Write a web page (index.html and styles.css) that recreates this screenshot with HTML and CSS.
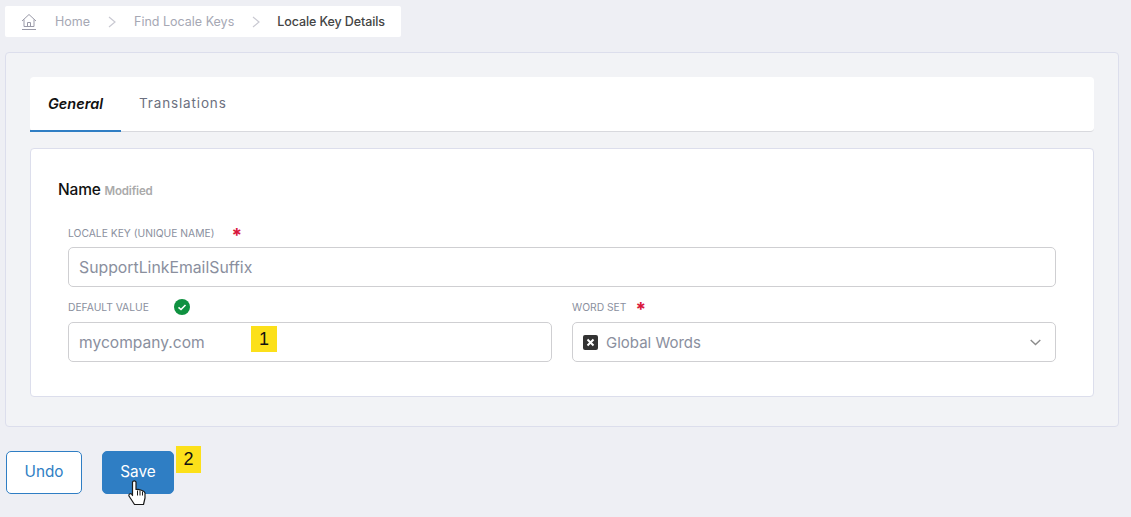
FILE: index.html
```html
<!DOCTYPE html>
<html lang="en">
<head>
<meta charset="utf-8">
<title>Locale Key Details</title>
<link rel="stylesheet" href="styles.css">
</head>
<body>
<nav class="crumbs">
  <svg class="home" width="16" height="18" viewBox="0 0 16 18" fill="none" stroke="#9a9aa8" stroke-width="1"><path d="M1 8 8 1.500 15 8M3 6.500V13.500H13V6.500M6.500 13.500V9.500H9.500V13.500M1 16.500H15"/></svg>
  <span class="crumb">Home</span>
  <svg class="sep" width="8" height="12" viewBox="0 0 8 12" fill="none" stroke="#c9c9d2" stroke-width="1.2"><path d="M1 1 7 6 1 11"/></svg>
  <span class="crumb">Find Locale Keys</span>
  <svg class="sep" width="8" height="12" viewBox="0 0 8 12" fill="none" stroke="#c9c9d2" stroke-width="1.2"><path d="M1 1 7 6 1 11"/></svg>
  <span class="crumb current">Locale Key Details</span>
</nav>
<main class="panel">
  <div class="tabs">
    <div class="tab active">General</div>
    <div class="tab">Translations</div>
  </div>
  <section class="card">
    <h2 class="title">Name <small class="modified">Modified</small></h2>
    <div class="label-row key-label"><label class="label">LOCALE KEY (UNIQUE NAME)</label><span class="req">*</span></div>
    <div class="input key-input">SupportLinkEmailSuffix</div>
    <div class="cols">
      <div class="col">
        <div class="label-row"><label class="label">DEFAULT VALUE</label>
          <svg class="ok" width="16" height="16" viewBox="0 0 16 16"><circle cx="8" cy="8" r="8" fill="#0f9140"/><path d="M4.500 8.300 7 10.500 11.500 6" fill="none" stroke="#fff" stroke-width="1.600"/></svg>
        </div>
        <div class="input">mycompany.com<span class="callout one">1</span></div>
      </div>
      <div class="col">
        <div class="label-row"><label class="label">WORD SET</label><span class="req near">*</span></div>
        <div class="input select">
          <span class="x"><svg width="15" height="15" viewBox="0 0 15 15"><rect width="15" height="15" rx="2" fill="#333"/><path d="M4.500 4.500 10.500 10.500M10.500 4.500 4.500 10.500" stroke="#fff" stroke-width="2"/></svg></span>
          <span class="grow">Global Words</span>
          <svg width="11" height="7" viewBox="0 0 11 7" fill="none" stroke="#8c8c8c" stroke-width="1.400"><path d="M.7 1 5.500 5.600 10.300 1"/></svg>
        </div>
      </div>
    </div>
  </section>
</main>
<div class="actions">
  <button class="btn undo">Undo</button>
  <button class="btn save">Save
    <span class="callout two">2</span>
    <svg class="cursor" width="18" height="26" viewBox="0 0 18 26"><path d="M4.500 2C5 .5 7.500.5 8 2V9.500L10 9.300 12 9.800 14 10.500 16 11.500 17 13V18L15.500 24.500H6.500L1 16C.5 14 2.500 13 3.500 14L4.500 15.500Z" fill="#fff" stroke="#1a1a1a" stroke-width="1.200" stroke-linejoin="round"/><path d="M9.500 10.500V15.500M12 10.500V15.500M14.500 11.500V15.500" stroke="#1a1a1a" stroke-width="1" fill="none"/></svg>
  </button>
</div>
</body>
</html>
```
FILE: styles.css
```css
* { box-sizing: border-box; }
html, body { margin: 0; }
body {
  width: 1131px;
  height: 517px;
  overflow: hidden;
  background: #eeeff4;
  padding: 6px 12px 0 5px;
  font-family: Inter, "Noto Sans", sans-serif;
  color: #8a8f9e;
}
.crumbs {
  width: 396px;
  height: 31px;
  background: #fff;
  border-radius: 2px;
  display: flex;
  align-items: center;
  padding-left: 16px;
  font-size: 12.5px;
}
.home { margin-right: 18px; }
.crumb { color: #a6a8b4; }
.sep { margin: 0 18px 0 18px; }
.current { color: #444; font-weight: 500; letter-spacing: -.1px; margin-left: -1px; }
.panel {
  margin-top: 15px;
  width: 1114px;
  height: 375px;
  background: #f2f3f6;
  border: 1px solid #dcdeec;
  border-radius: 4px;
  padding: 24px;
}
.tabs {
  height: 55px;
  background: #fff;
  border-bottom: 1px solid #d8d9de;
  border-radius: 4px;
  display: flex;
  font-size: 13.5px;
}
.tab {
  padding: 0 18px;
  line-height: 53px;
  color: #6c7080;
  letter-spacing: .85px;
}
.tab.active {
  width: 91px;
  height: 55px;
  border-bottom: 2px solid #2f7ec4;
  color: #111;
  font-size: 14.5px;
  font-style: italic;
  font-weight: 600;
  letter-spacing: 0;
}
.card {
  margin-top: 16px;
  height: 249px;
  background: #fff;
  border: 1px solid #dcdeec;
  border-radius: 4px;
  padding: 32px 37px 0;
}
.title {
  margin: 0 0 0 -10px;
  font-size: 15.500px;
  line-height: 18px;
  font-weight: 500;
  color: #111;
  letter-spacing: -.2px;
}
.modified { font-size: 11.500px; font-weight: 600; color: #aaa; letter-spacing: -.15px; }
.label-row { display: flex; align-items: center; height: 16px; }
.key-label { margin-top: 25px; margin-bottom: 6px; }
.label { font-size: 10.300px; color: #8a8f9e; }
.req { color: #d9163c; font-size: 19px; line-height: 16px; margin-left: 17px; padding-top: 5px; font-weight: 700; }
.req.near { margin-left: 9px; }
.ok { margin-left: 25px; }
.input {
  position: relative;
  height: 40px;
  border: 1px solid #cfcfd2;
  border-radius: 5px;
  background: #fff;
  padding: 0 10px;
  display: flex;
  align-items: center;
  font-size: 15.600px;
  color: #8a8f9e;
}
.key-input { font-size: 15.800px; }
.cols { display: flex; gap: 20px; margin-top: 12px; }
.col { flex: 1; }
.col .label-row { margin-bottom: 7px; }
.select { gap: 8px; font-size: 15px; }
.x { display: flex; margin-right: -4px; }
.grow { flex: 1; }
.select svg:last-child { margin-right: 4px; }
.callout {
  position: absolute;
  background: #fce01a;
  color: #111;
  font-family: "Liberation Sans", sans-serif;
  font-size: 18px;
  font-weight: 400;
  display: flex;
  align-items: center;
  justify-content: center;
}
.one { left: 182px; top: 3px; width: 26px; height: 26px; }
.two { left: 73px; top: -6px; width: 25px; height: 27px; }
.actions { display: flex; gap: 20px; margin-top: 24px; padding-left: 1px; }
.btn {
  position: relative;
  height: 43px;
  border: 1px solid #2f7ec4;
  border-radius: 5px;
  font-family: inherit;
  font-size: 15.300px;
  padding: 0 0 2px;
}
.undo { width: 76px; background: #fff; color: #2f7ec4; }
.save { width: 72px; background: #2f7ec4; color: #fff; }
.cursor { position: absolute; left: 25px; top: 28px; }
```
